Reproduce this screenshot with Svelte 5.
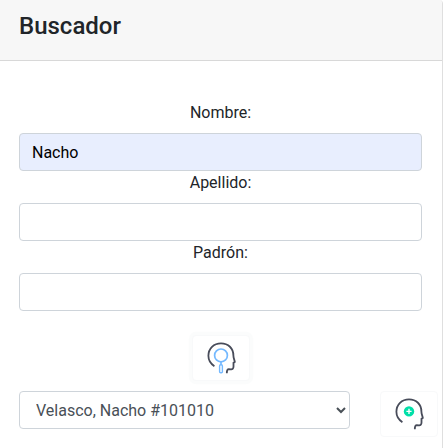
<script>
  let nombre = $state('Nacho');
  let apellido = $state('');
  let padron = $state('');
</script>

{#snippet head()}
  <path
    d="M9.4 24.2C5.4 21.6 3.4 18.2 3.4 13.8C3.4 6.5 8.8 1.4 16 1.4C23.3 1.4 28.4 6.3 28.4 13.6C28.4 16.2 29.6 18.1 29.8 19.9C29.8 20.5 29 20.6 28.5 20.7V24.6C28.5 26.6 27.6 27.4 26 27.3L23.8 27.2C22.4 27.2 21.8 28.2 21.8 31.2"
    fill="none"
    stroke="#484c5a"
    stroke-width="1.8"
    stroke-linejoin="round"
  />
{/snippet}

<section class="card">
  <header><h4>Buscador</h4></header>
  <div class="body">
    <form>
      <label for="nombre">Nombre:</label>
      <input id="nombre" class="filled" bind:value={nombre} />
      <label for="apellido">Apellido:</label>
      <input id="apellido" bind:value={apellido} />
      <label for="padron">Padrón:</label>
      <input id="padron" bind:value={padron} />
      <button type="button" class="search" aria-label="Buscar">
        <svg width="32" height="32" viewBox="0 0 32 32">
          {@render head()}
          <g fill="none" stroke="#74b9ff" stroke-width="1.7">
            <circle cx="16" cy="13.4" r="6.4" />
            <path d="M16 19.8v3" />
            <rect x="14.6" y="22.8" width="2.8" height="8" rx="1.1" stroke-width="1.4" />
          </g>
        </svg>
      </button>
    </form>
    <div class="result">
      <select aria-label="Alumno">
        <option>Velasco, Nacho #101010</option>
      </select>
      <button type="button" aria-label="Agregar">
        <svg width="32" height="32" viewBox="0 0 32 32">
          {@render head()}
          <circle cx="16" cy="13.4" r="5.2" fill="#00dfa8" />
          <path d="M16 10.8v5.2M13.4 13.4h5.2" stroke="#fff" stroke-width="1.4" />
        </svg>
      </button>
    </div>
  </div>
</section>

<style>
  :global(body) {
    background: #fff;
    overflow: hidden;
  }
  .card {
    box-sizing: border-box;
    width: 443px;
    height: 448px;
    overflow: hidden;
    border-right: 1px solid #dfdfdf;
    border-top-right-radius: 4px;
    font: 16px/24px Roboto, sans-serif;
    color: #212529;
  }
  header {
    box-sizing: border-box;
    height: 61px;
    padding: 12px 19px 0;
    background: #f7f7f7;
    border-bottom: 1px solid #d8d8d8;
  }
  h4 {
    margin: 0;
    font-size: 24px;
    line-height: 29px;
    font-weight: 500;
  }
  .body {
    padding: 40px 0 0 19px;
  }
  form {
    display: flex;
    flex-direction: column;
    align-items: center;
    width: 403px;
  }
  label {
    height: 32px;
  }
  input,
  select {
    box-sizing: border-box;
    height: 38px;
    border: 1px solid #ced4da;
    border-radius: 4px;
    background: #fff;
    color: #495057;
    font: inherit;
    outline: none;
  }
  input {
    width: 100%;
    padding: 6px 12px;
  }
  .filled {
    background: #e8eefe;
    color: #000;
  }
  button {
    box-sizing: border-box;
    flex: none;
    width: 58px;
    height: 46px;
    padding: 6px 12px;
    border: 1px solid #f8f9fa;
    border-radius: 4px;
    background: #fff;
  }
  .search {
    margin-top: 24px;
    box-shadow: 0 0 0 3.2px rgba(248, 249, 250, 0.5);
  }
  svg {
    display: block;
  }
  .result {
    display: flex;
    align-items: flex-start;
    gap: 30px;
    margin-top: 10px;
  }
  select {
    width: 331px;
    padding: 6px 12px;
  }
</style>
